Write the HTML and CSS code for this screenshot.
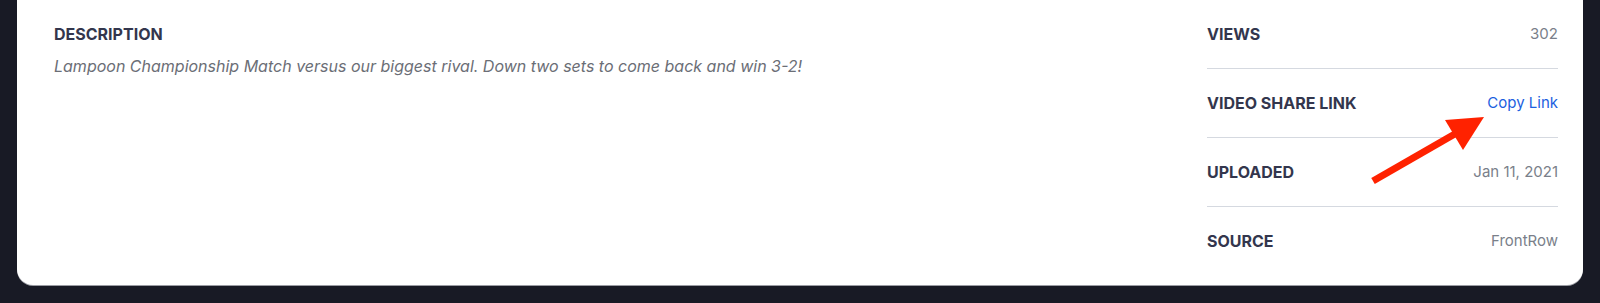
FILE: index.html
```html
<!DOCTYPE html>
<html lang="en">
<head>
  <meta charset="UTF-8">
  <meta name="viewport" content="width=device-width, initial-scale=1.0">
  <title>Video Details</title>
  <link rel="stylesheet" href="styles.css">
</head>
<body>

<div class="card">
  <section class="about">
    <h2 class="label">Description</h2>
    <p class="desc">Lampoon Championship Match versus our biggest rival. Down two sets to come back and win 3-2!</p>
  </section>

  <dl class="meta">
    <div class="row">
      <dt class="label">Views</dt>
      <dd>302</dd>
    </div>
    <div class="row">
      <dt class="label">Video Share Link</dt>
      <dd><a href="#" class="link">Copy Link</a></dd>
    </div>
    <div class="row">
      <dt class="label">Uploaded</dt>
      <dd>Jan 11, 2021</dd>
    </div>
    <div class="row">
      <dt class="label">Source</dt>
      <dd>FrontRow</dd>
    </div>
  </dl>

  <!-- annotation arrow pointing at the copy link -->
  <svg class="arrow" width="160" height="100" viewBox="0 0 160 100">
    <line x1="33" y1="81" x2="120" y2="31" stroke="#ff2200" stroke-width="7"/>
    <polygon points="144,17 105,20 123,50" fill="#ff2200"/>
  </svg>
</div>

</body>
</html>
```

FILE: styles.css
```css
body { margin: 0; padding: 0 17px 18px; background-color: #181a25; font-family: Inter, "Noto Sans", sans-serif; }
.card { position: relative; display: flex; background-color: #fff; border-radius: 0 0 16px 16px; padding: 0 25px 10px 37px; box-shadow: 0 1px 0 #9a9ca3; }
.about { flex: 1; padding-top: 22px; }
.label { margin: 0; font-size: 16px; line-height: 24px; font-weight: 700; text-transform: uppercase; color: #33364d; }
.desc { margin: 8px 0 0; font-size: 16px; line-height: 24px; font-style: italic; color: #6b6e76; }
.meta { width: 351px; margin: 0; }
.meta .label { line-height: 20px; }
.row { display: flex; justify-content: space-between; padding: 24px 0; border-bottom: 1px solid #d5d9e0; }
.row:last-child { border-bottom: none; }
.row dd { margin: 0; font-size: 15px; line-height: 20px; color: #7a7f8a; }
.link { color: #1c5fe0; text-decoration: none; }
.arrow { position: absolute; left: 1323px; top: 100px; }
```
